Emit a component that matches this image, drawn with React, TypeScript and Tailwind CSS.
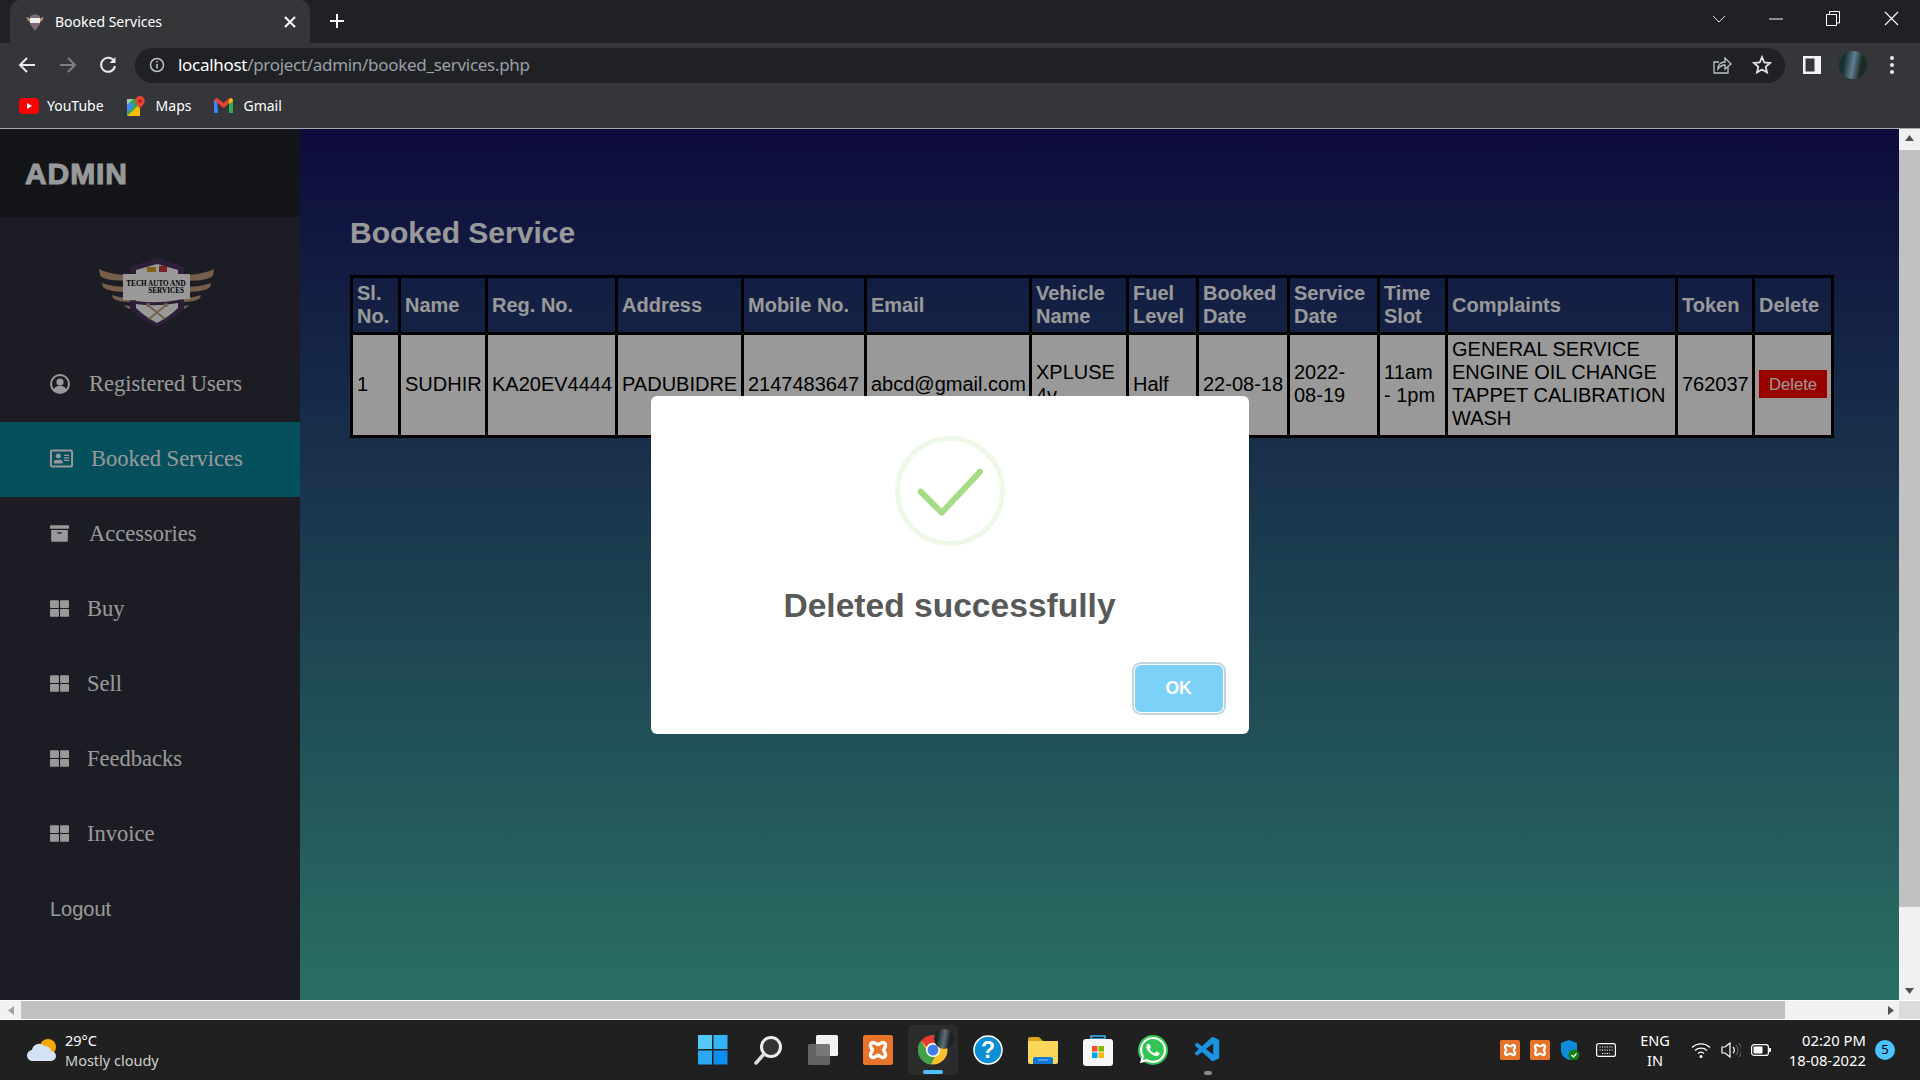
import { FaArchive, FaRegAddressCard, FaThLarge, FaWhatsapp } from "react-icons/fa";
import { VscVscode } from "react-icons/vsc";
// ============================================================================
const columns = [48, 87, 130, 126, 123, 165, 97, 70, 91, 90, 68, 230, 77, 79];
const headers = ["Sl. No.", "Name", "Reg. No.", "Address", "Mobile No.", "Email", "Vehicle Name", "Fuel Level", "Booked Date", "Service Date", "Time Slot", "Complaints", "Token", "Delete"];

function UserIcon() {
  return (
    <svg width="20" height="20" viewBox="0 0 20 20">
      <circle cx="10" cy="10" r="9" fill="none" stroke="currentColor" strokeWidth="2" />
      <circle cx="10" cy="8" r="3.600" fill="currentColor" />
      <path d="M3.500 16c1-3 3.500-4.300 6.500-4.300s5.500 1.300 6.500 4.300a9 9 0 0 1-13 0z" fill="currentColor" />
    </svg>
  );
}

const menu = [
  { label: "Registered Users", icon: <UserIcon />, gap: "gap-[19px]" },
  { label: "Booked Services", icon: <FaRegAddressCard size={23} />, gap: "gap-[18px]", active: true },
  { label: "Accessories", icon: <FaArchive size={19} />, gap: "gap-[20px]" },
  { label: "Buy", icon: <FaThLarge size={19} />, gap: "gap-[18px]" },
  { label: "Sell", icon: <FaThLarge size={19} />, gap: "gap-[18px]" },
  { label: "Feedbacks", icon: <FaThLarge size={19} />, gap: "gap-[18px]" },
  { label: "Invoice", icon: <FaThLarge size={19} />, gap: "gap-[18px]" },
];

function Xampp({ size = 30 }: { size?: number }) {
  return (
    <svg width={size} height={size} viewBox="0 0 30 30">
      <rect width="30" height="30" rx="2.500" fill="#e8742a" />
      <path d="M8.500 8c2.500-2 4 1.500 6.500 1.500S19 6 21.500 8s.5 4.500-1 7c1.500 2.500 3.500 5 1 7s-4-1.500-6.500-1.500S11 24 8.500 22s-.5-4.500 1-7c-1.500-2.500-3.500-5-1-7z" fill="none" stroke="#fff" strokeWidth="3.400" />
    </svg>
  );
}

function TabLogo() {
  return (
    <svg width="20" height="20" viewBox="0 0 20 20">
      <path d="M1 5l6 2v4L3 9zM19 5l-6 2v4l4-2z" fill="#b89270" />
      <path d="M10 2l5 2v8l-5 7-5-7V4z" fill="#7d6a72" />
      <rect x="5" y="6" width="10" height="5" fill="#eee" />
    </svg>
  );
}

function ShopLogo() {
  const wing = (
    <g fill="#c49f7c">
      <path d="M39 29c10 5 22 6 32 6v6c-14 0-29-1-31-6z" />
      <path d="M42 43c9 3 19 4 28 4v5c-12 0-24-1-27-5z" />
      <path d="M52 55c6 2 12 3 19 3v4c-8 0-15-1-18-4z" />
      <path d="M64 65c3 1 6 1 10 1l3 4c-6 0-11-2-13-5z" />
    </g>
  );
  return (
    <svg width="180" height="100" viewBox="0 0 180 100">
      {wing}
      <g transform="translate(193 0) scale(-1 1)">{wing}</g>
      <path d="M97 18l27 9v42q-10 10-27 18q-17-8-27-18V27z" fill="#4b3560" />
      <path d="M97 24l21 6v38q-8 8-21 15q-13-7-21-15V30z" fill="#fff" />
      <rect x="87" y="27" width="9" height="5" fill="#d2a52a" />
      <rect x="99" y="26" width="8" height="6" fill="#c73b34" />
      <path d="M63 34h67v25l-33 2-34-1z" fill="#fff" />
      <path d="M76 61q21 3 42-1v3q-21 4-42 1z" fill="#4b3560" />
      <text x="96" y="46" textAnchor="middle" className="font-['Liberation_Serif',serif] font-bold text-[7.2px] fill-black">TECH AUTO AND</text>
      <text x="124" y="53" textAnchor="end" className="font-['Liberation_Serif',serif] font-bold text-[7.2px] fill-black">SERVICES</text>
      <path d="M89 66l16 13M105 66L89 79" stroke="#c49f7c" strokeWidth="2" />
      <circle cx="88" cy="65" r="2" fill="#c49f7c" />
      <circle cx="106" cy="65" r="2" fill="#c49f7c" />
    </svg>
  );
}

function BrowserChrome() {
  return (
    <div className="shrink-0 text-white">
      <div className="flex h-[43px] bg-[#202124] pl-[10px]">
        <div className="flex w-[300px] items-center rounded-t-[10px] bg-[#35363a] pl-[15px] pr-[13px]">
          <TabLogo />
          <span className="ml-[10px] text-[14px]">Booked Services</span>
          <svg className="ml-auto" width="14" height="14" viewBox="0 0 14 14"><path d="M2 2l10 10M12 2L2 12" stroke="#fff" strokeWidth="2" /></svg>
        </div>
        <svg className="ml-[19px] mt-[13px]" width="16" height="16" viewBox="0 0 16 16"><path d="M8 1v14M1 8h14" stroke="#fff" strokeWidth="2" /></svg>
        <div className="ml-auto flex items-center pb-[6px]">
          <svg width="14" height="8" viewBox="0 0 14 8"><path d="M1 1l6 6 6-6" fill="none" stroke="#ddd" /></svg>
          <svg className="ml-[43px]" width="14" height="2" viewBox="0 0 14 2"><path d="M0 1h14" stroke="#fff" /></svg>
          <svg className="ml-[43px]" width="14" height="15" viewBox="0 0 14 15"><path d="M.5 3.500h10v11H.5zM3.500 3V.5h10V12H11" fill="none" stroke="#fff" /></svg>
          <svg className="ml-[44px] mr-[21px]" width="15" height="15" viewBox="0 0 15 15"><path d="M1 1l13 13M14 1L1 14" stroke="#fff" strokeWidth="1.100" /></svg>
        </div>
      </div>
      <div className="flex h-[44px] items-center bg-[#35363a] pl-[18px]">
        <svg width="18" height="18" viewBox="0 0 18 18"><path d="M17 9H2M9 2L2 9l7 7" fill="none" stroke="#e8eaed" strokeWidth="2" /></svg>
        <svg className="ml-[23px]" width="18" height="18" viewBox="0 0 18 18"><path d="M1 9h15M9 2l7 7-7 7" fill="none" stroke="#7d7f83" strokeWidth="2" /></svg>
        <svg className="ml-[22px]" width="18" height="18" viewBox="0 0 18 18"><path d="M15 5a7 7 0 1 0 1 5" fill="none" stroke="#e8eaed" strokeWidth="2" /><path d="M16.500 1v6h-6z" fill="#e8eaed" /></svg>
        <div className="ml-[18px] flex h-[35px] w-[1650px] items-center rounded-full bg-[#202124] pl-[14px] pr-[10px]">
          <svg width="16" height="16" viewBox="0 0 16 16"><circle cx="8" cy="8" r="6.500" fill="none" stroke="#bdc1c6" strokeWidth="1.500" /><path d="M8 7v4.500M8 4v1.600" stroke="#bdc1c6" strokeWidth="1.600" /></svg>
          <span className="ml-[13px] text-[17px] tracking-[-0.3px]">localhost<span className="text-[#9aa0a6]">/project/admin/booked_services.php</span></span>
          <svg className="ml-auto" width="20" height="20" viewBox="0 0 20 20"><path d="M16 12v6H2V7h5" fill="none" stroke="#bdc1c6" strokeWidth="1.300" /><path d="M6 14c0-5 3-7 7-7V3l6 6-6 5v-4c-3 0-5 1-7 4z" fill="none" stroke="#bdc1c6" strokeWidth="1.300" /></svg>
          <svg className="ml-[20px] mr-[3px]" width="20" height="20" viewBox="0 0 20 20"><path d="M10 2l2.300 5.500 5.700.5-4.300 3.800 1.300 5.700L10 14.500l-5 3 1.300-5.700L2 8l5.700-.5z" fill="none" stroke="#e0e2e5" strokeWidth="1.800" /></svg>
        </div>
        <svg className="ml-[18px]" width="18" height="18" viewBox="0 0 18 18"><rect width="18" height="18" fill="#f1f3f4" /><rect x="2.500" y="2.500" width="9" height="13" fill="#35363a" /></svg>
        <div className="ml-[18px] h-[28px] w-[28px] rounded-full bg-[linear-gradient(100deg,#16302f_20%,#5f7f92_50%,#1c2a28_75%)]" />
        <div className="ml-[23px] flex flex-col gap-[3px]">
          <i className="h-[4px] w-[4px] rounded-full bg-[#e8eaed]" />
          <i className="h-[4px] w-[4px] rounded-full bg-[#e8eaed]" />
          <i className="h-[4px] w-[4px] rounded-full bg-[#e8eaed]" />
        </div>
      </div>
      <div className="flex h-[42px] items-center border-b border-[#a8a8ab] bg-[#35363a] pb-[4px] pl-[19px] text-[14px]">
        <svg width="20" height="16" viewBox="0 0 20 16"><rect width="20" height="16" rx="4" fill="#f00" /><path d="M8 5l5 3-5 3z" fill="#fff" /></svg>
        <span className="ml-[8px]">YouTube</span>
        <svg className="ml-[23px]" width="18" height="20" viewBox="0 0 18 20"><path d="M0 3h13v17H0z" fill="#35a853" /><path d="M0 20L13 8v12z" fill="#fbbc04" /><path d="M0 3l7 7-7 7z" fill="#4285f4" /><path d="M0 3h6L0 9z" fill="#9fd09a" /><path d="M13 0a4.800 4.800 0 0 1 4.800 4.800C17.800 8 14.500 10 13 13c-1.500-3-4.800-5-4.800-8.200A4.800 4.800 0 0 1 13 0z" fill="#ea4335" /><circle cx="13" cy="5" r="1.600" fill="#8c1f17" /></svg>
        <span className="ml-[11px]">Maps</span>
        <svg className="ml-[23px]" width="19" height="15" viewBox="0 0 19 15"><path d="M0 15V2l3-1 1 14z" fill="#4285f4" /><path d="M15 15V1l3 0 1 2v12z" fill="#34a853" /><path d="M0 2l3-2 6.500 5 6-5 3.500 2-9.500 8z" fill="#ea4335" /><path d="M15 1l3-1 1 3-4 3z" fill="#fbbc04" /></svg>
        <span className="ml-[10px]">Gmail</span>
      </div>
    </div>
  );
}

function Sidebar() {
  return (
    <aside className="flex w-[300px] shrink-0 flex-col bg-[#2f303c] text-white">
      <div className="flex h-[88px] items-center bg-[#21232a] pl-[25px]">
        <h2 className="font-['Liberation_Sans',sans-serif] text-[30px] font-bold tracking-[0.9px] [-webkit-text-stroke:1px_white]">ADMIN</h2>
      </div>
      <div className="flex h-[130px] justify-center pt-[23px]"><ShopLogo /></div>
      <ul className="flex flex-col font-['Liberation_Serif',serif] text-[22.5px]">
        {menu.map((item) => (
          <li key={item.label} className={`flex h-[75px] items-center pb-[2px] pl-[50px] ${item.gap} ${item.active ? "bg-[#0a859d]" : ""}`}>
            {item.icon}
            <span>{item.label}</span>
          </li>
        ))}
        <li className="flex h-[75px] items-center pb-[2px] pl-[50px] font-['Liberation_Sans',sans-serif] text-[20px]">Logout</li>
      </ul>
    </aside>
  );
}

function ServiceTable() {
  return (
    <table className="table-fixed border-collapse border-[3px] border-black text-left text-[20px] leading-[23px] w-[1481px]">
      <colgroup>
        {columns.map((width, index) => <col key={index} span={1} width={width} />)}
      </colgroup>
      <thead>
        <tr>
          {headers.map((header) => (
            <th key={header} className="border-[3px] border-black p-[4px] font-bold text-white">{header}</th>
          ))}
        </tr>
      </thead>
      <tbody className="bg-white text-black">
        <tr className="[&>td]:border-[3px] [&>td]:border-black [&>td]:px-[4px] [&>td]:pb-[5px] [&>td]:pt-[3px]">
          <td>1</td>
          <td>SUDHIR</td>
          <td className="whitespace-nowrap">KA20EV4444</td>
          <td>PADUBIDRE</td>
          <td>2147483647</td>
          <td>abcd@gmail.com</td>
          <td>XPLUSE 4v</td>
          <td>Half</td>
          <td className="whitespace-nowrap">22-08-18</td>
          <td>2022-08-19</td>
          <td>11am - 1pm</td>
          <td>GENERAL SERVICE<br />ENGINE OIL CHANGE<br />TAPPET CALIBRATION<br />WASH</td>
          <td>762037</td>
          <td><button className="flex h-[28px] w-[68px] items-center justify-center bg-[#ff0000] text-[16.7px] text-white">Delete</button></td>
        </tr>
      </tbody>
    </table>
  );
}

function SuccessDialog() {
  return (
    <div className="absolute inset-0 flex items-center justify-center bg-black/40">
      <div className="flex h-[338px] w-[598px] flex-col items-center rounded-[6px] bg-white pt-[40px] font-['Liberation_Sans',sans-serif]">
        <div className="flex h-[110px] w-[110px] items-center justify-center rounded-full border-[5px] border-[#a5dc86]/20">
          <svg width="110" height="110" viewBox="0 0 110 110" className="shrink-0">
            <path d="M25.700 55.700l21 21L85 35.700" fill="none" stroke="#a5dc86" strokeWidth="6" strokeLinecap="round" strokeLinejoin="round" />
          </svg>
        </div>
        <h2 className="mt-[40px] text-[33.6px] font-bold leading-[40px] text-[#595959]">Deleted successfully</h2>
        <div className="mt-[39px] flex w-full justify-end pr-[26px]">
          <button className="h-[47px] w-[88px] rounded-[6px] bg-[#7cd1f9] text-[17.5px] font-bold text-white shadow-[0_0_0_1px_#fff,0_0_0_3px_rgba(43,114,165,0.29)]">OK</button>
        </div>
      </div>
    </div>
  );
}

function Scrollbars() {
  return (
    <div className="flex w-[21px] shrink-0 flex-col items-center bg-[#f1f1f1]">
      <svg className="my-[6px]" width="9" height="6" viewBox="0 0 9 6"><path d="M4.500 0L9 6H0z" fill="#505050" /></svg>
      <div className="mt-[3px] h-[757px] w-full bg-[#c1c1c1]" />
      <svg className="mt-auto mb-[6px]" width="9" height="6" viewBox="0 0 9 6"><path d="M4.500 6L9 0H0z" fill="#505050" /></svg>
    </div>
  );
}

function Cell({ children, active, dot }: { children: React.ReactNode; active?: boolean; dot?: boolean }) {
  return (
    <div className="relative flex h-[50px] w-[55px] items-center justify-center">
      {active && <div className="absolute inset-y-0 left-[3px] right-[2px] rounded-[5px] bg-[#2b2b2b]" />}
      <div className="relative flex">{children}</div>
      {active && <div className="absolute bottom-[1px] left-[18px] h-[4px] w-[20px] rounded-full bg-[#4cc2ff]" />}
      {dot && <div className="absolute bottom-[0px] left-[24px] h-[4px] w-[8px] rounded-full bg-[#8a8a8a]" />}
    </div>
  );
}

function Taskbar() {
  return (
    <div className="flex h-[60px] shrink-0 items-center bg-[#202020] font-['Noto_Sans',sans-serif] text-white">
      <div className="flex w-[685px] shrink-0 items-center pl-[27px]">
        <svg width="30" height="24" viewBox="0 0 30 24"><circle cx="21" cy="9" r="8" fill="#f5a800" /><path d="M6 23a5.500 5.500 0 0 1-1-11 7 7 0 0 1 12-4 6 6 0 0 1 7 5 5 5 0 0 1 0 10z" fill="#d3e3f3" /></svg>
        <div className="ml-[8px] text-[14.5px] leading-[20px]">
          <div>29°C</div>
          <div className="text-[#cfcfcf]">Mostly cloudy</div>
        </div>
      </div>
      <div className="flex">
        <Cell><svg width="30" height="30" viewBox="0 0 30 30"><rect width="14" height="14" fill="#54c8f7" /><rect x="15.500" width="14" height="14" fill="#35b4f5" /><rect y="15.500" width="14" height="14" fill="#2aa8f3" /><rect x="15.500" y="15.500" width="14" height="14" fill="#0f8ef0" /></svg></Cell>
        <Cell><svg width="30" height="30" viewBox="0 0 30 30"><circle cx="18" cy="12" r="9.500" fill="#333" stroke="#eee" strokeWidth="3" /><path d="M11 19l-8 9" stroke="#ddd" strokeWidth="3.500" strokeLinecap="round" /></svg></Cell>
        <Cell><svg width="30" height="30" viewBox="0 0 30 30"><rect x="8" width="22" height="21" rx="1.500" fill="#f2f2f2" /><rect y="9" width="22" height="21" rx="1.500" fill="#6a6a6a" fillOpacity="0.9" /></svg></Cell>
        <Cell><Xampp /></Cell>
        <Cell active>
          <svg width="30" height="30" viewBox="0 0 30 30">
            <circle cx="15" cy="15" r="14.500" fill="#fbc02d" />
            <path d="M15 .5a14.500 14.500 0 0 1 12.600 7.300H15a7 7 0 0 0-6.300 4.200L3 5.800A14.500 14.500 0 0 1 15 .5z" fill="#e53935" />
            <path d="M3 5.800L9 16a7 7 0 0 0 8 5.700l-4 7.700A14.500 14.500 0 0 1 3 5.800z" fill="#43a047" />
            <circle cx="15" cy="15" r="7" fill="#fff" />
            <circle cx="15" cy="15" r="5.500" fill="#3f7de8" />
          </svg>
          <div className="absolute right-[-6px] top-[-6px] h-[20px] w-[20px] rounded-full bg-[linear-gradient(100deg,#1a2424_20%,#5d6f7a_50%,#1c2222_75%)]" />
        </Cell>
        <Cell>
          <svg width="30" height="30" viewBox="0 0 30 30"><circle cx="15" cy="15" r="14" fill="#0a8fd6" stroke="#fff" strokeWidth="1.500" /><text x="15" y="23" textAnchor="middle" className="fill-white font-['Liberation_Sans',sans-serif] text-[23px] font-bold">?</text></svg>
        </Cell>
        <Cell><svg width="30" height="27" viewBox="0 0 30 27"><path d="M0 2a2 2 0 0 1 2-2h9l4 4H0z" fill="#dba21b" /><path d="M0 4h30v21a2 2 0 0 1-2 2H2a2 2 0 0 1-2-2z" fill="#fbd75b" /><path d="M5 27v-5a2 2 0 0 1 2-2h16a2 2 0 0 1 2 2v5z" fill="#0f78d2" /><path d="M10 23h10" stroke="#8cc8ff" /></svg></Cell>
        <Cell>
          <svg width="30" height="31" viewBox="0 0 30 31"><path d="M8 1h14v3H8z" fill="none" stroke="#38b6f4" strokeWidth="1.500" /><rect y="4" width="30" height="27" rx="3" fill="#f7f7f7" /><rect x="9" y="11" width="5.500" height="5.500" fill="#f25022" /><rect x="15.500" y="11" width="5.500" height="5.500" fill="#7fba00" /><rect x="9" y="17.500" width="5.500" height="5.500" fill="#00a4ef" /><rect x="15.500" y="17.500" width="5.500" height="5.500" fill="#ffb900" /></svg>
        </Cell>
        <Cell><div className="rounded-full bg-[#30c554] leading-none text-white"><FaWhatsapp size={30} /></div></Cell>
        <Cell dot><VscVscode size={30} className="text-[#1b93e2]" /></Cell>
      </div>
      <div className="ml-auto flex items-center pr-[25px]">
        <div className="flex w-[30px] justify-center"><Xampp size={20} /></div>
        <div className="flex w-[30px] justify-center"><Xampp size={20} /></div>
        <div className="flex w-[30px] justify-center">
          <svg width="20" height="20" viewBox="0 0 20 20"><path d="M9 0l8 3v7c0 5-3 8-8 10-5-2-8-5-8-10V3z" fill="#0f8bdc" /><circle cx="14" cy="15" r="5.500" fill="#107c10" /><path d="M11.500 15l2 2 3-3.500" fill="none" stroke="#fff" strokeWidth="1.300" /></svg>
        </div>
        <div className="flex w-[42px] justify-center">
          <svg width="20" height="14" viewBox="0 0 20 14"><rect x=".6" y=".6" width="18.800" height="12.800" rx="2" fill="none" stroke="#fff" strokeWidth="1.200" /><path d="M3.500 4h13M3.500 7h13M6 10.500h8" stroke="#fff" strokeDasharray="1.200 1.200" /></svg>
        </div>
        <div className="flex w-[56px] flex-col items-center text-[14.5px] leading-[20px]"><span>ENG</span><span>IN</span></div>
        <div className="flex w-[36px] justify-center">
          <svg width="20" height="16" viewBox="0 0 20 16"><path d="M1 5.500a13 13 0 0 1 18 0M4 8.500a9 9 0 0 1 12 0M7 11.500a4.500 4.500 0 0 1 6 0" fill="none" stroke="#fff" strokeWidth="1.300" /><circle cx="10" cy="14.500" r="1.500" fill="#fff" /></svg>
        </div>
        <div className="flex w-[24px] justify-center">
          <svg width="20" height="16" viewBox="0 0 20 16"><path d="M1 5h3l5-4v14l-5-4H1z" fill="none" stroke="#fff" strokeWidth="1.200" /><path d="M12 5a4 4 0 0 1 0 6" fill="none" stroke="#fff" strokeWidth="1.200" /><path d="M15 3a8 8 0 0 1 0 10M18 1a11 11 0 0 1 0 14" fill="none" stroke="#777" /></svg>
        </div>
        <div className="flex w-[36px] justify-center">
          <svg width="20" height="12" viewBox="0 0 20 12"><rect x=".6" y=".6" width="16.800" height="10.800" rx="2.500" fill="none" stroke="#fff" strokeWidth="1.200" /><rect x="2.500" y="2.500" width="9" height="7" rx="1" fill="#fff" /><rect x="18" y="4" width="2" height="4" fill="#fff" /></svg>
        </div>
        <div className="w-[87px] text-right text-[14.8px] leading-[20px]"><div>02:20 PM</div><div>18-08-2022</div></div>
        <div className="ml-[9px] flex h-[20px] w-[20px] items-center justify-center rounded-full bg-[#4cc2ff] text-[13px] text-black">5</div>
      </div>
    </div>
  );
}

export default function App() {
  return (
    <div className="flex h-screen flex-col overflow-hidden bg-[#202020] font-['Noto_Sans',sans-serif]">
      <BrowserChrome />
      <div className="flex h-[871px] shrink-0">
        <div className="relative flex min-w-0 flex-1">
          <Sidebar />
          <main className="flex-1 bg-[linear-gradient(to_bottom,#171464,#46b9a7)] pl-[50px] pt-[85px] font-['Liberation_Sans',sans-serif]">
            <h1 className="mb-[24px] text-[30px] font-bold leading-[37px] text-white">Booked Service</h1>
            <ServiceTable />
          </main>
          <SuccessDialog />
        </div>
        <Scrollbars />
      </div>
      <div className="flex h-[20px] shrink-0 items-center border-y border-white bg-[#f1f1f1]">
        <svg className="ml-[8px]" width="6" height="9" viewBox="0 0 6 9"><path d="M0 4.500L6 0v9z" fill="#a0a0a0" /></svg>
        <div className="ml-[7px] h-full w-[1764px] bg-[#c1c1c1]" />
        <svg className="ml-[103px]" width="6" height="9" viewBox="0 0 6 9"><path d="M6 4.500L0 0v9z" fill="#505050" /></svg>
        <div className="ml-auto h-full w-[21px] bg-[#dcdcdc]" />
      </div>
      <Taskbar />
    </div>
  );
}
